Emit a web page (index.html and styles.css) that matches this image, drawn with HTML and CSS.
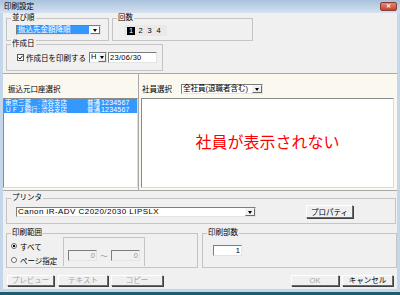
FILE: index.html
```html
<!DOCTYPE html>
<html lang="ja">
<head>
<meta charset="UTF-8">
<title>印刷設定</title>
<link rel="stylesheet" href="styles.css">
</head>
<body>

<div class="window">
<div class="titlebar">
<span class="title">印刷設定</span>
<span class="close">✕</span>
</div>

<div class="client">

<div class="top">
<div class="row">
<div class="group g-sort">
<span class="group-label">並び順</span>
<div class="select sel-sort"><span class="sel-text hl">振込先金額降順</span><span class="arrow"></span></div>
</div>
<div class="group g-count">
<span class="group-label">回数</span>
<div class="counts"><span class="num on">1</span><span class="num">2</span><span class="num">3</span><span class="num">4</span></div>
</div>
</div>

<div class="group g-date">
<span class="group-label">作成日</span>
<div class="date-row">
<span class="check"><svg width="5" height="5" viewBox="0 0 5 5"><polyline points="0.5,2.5 2,4 4.5,0.8" fill="none" stroke="#000" stroke-width="1"/></svg></span>
<span class="check-text">作成日を印刷する</span>
<div class="select sel-era"><span class="sel-text">H</span><span class="arrow"></span></div>
<div class="input date-input">23/06/30</div>
</div>
</div>
</div>

<div class="middle">
<div class="panel p-left">
<div class="panel-head">振込元口座選択</div>
<div class="list">
<div class="list-row sel"><span class="bank">東京三菱</span><span class="colon">:</span><span class="branch">渋谷支店</span><span class="type">普通</span><span class="no">1234567</span></div>
<div class="list-row sel"><span class="bank">ＵＦＪ銀行</span><span class="colon">:</span><span class="branch">渋谷支店</span><span class="type">普通</span><span class="no">1234567</span></div>
</div>
</div>
<div class="panel p-right">
<div class="panel-head">
<span>社員選択</span>
<div class="select sel-emp"><span class="sel-text">全社員(退職者含む)</span><span class="arrow"></span></div>
</div>
<div class="list emp-list">
<span class="empty-msg">社員が表示されない</span>
</div>
</div>
</div>

<div class="group g-printer">
<span class="group-label">プリンタ</span>
<div class="printer-row">
<div class="select sel-printer"><span class="sel-text">Canon iR-ADV C2020/2030 LIPSLX</span><span class="arrow"></span></div>
<button class="btn btn-prop">プロパティ</button>
</div>
</div>

<div class="row range-row">
<div class="group g-range">
<span class="group-label">印刷範囲</span>
<div class="radios">
<div class="radio-item"><span class="radio on"></span>すべて</div>
<div class="radio-item"><span class="radio"></span>ページ指定</div>
</div>
<div class="pages">
<div class="input page-input">0</div>
<span class="tilde">～</span>
<div class="input page-input">0</div>
</div>
</div>
<div class="group g-copies">
<span class="group-label">印刷部数</span>
<div class="input copies-input">1</div>
</div>
</div>

<div class="buttons">
<button class="btn b-preview" disabled>プレビュー</button>
<button class="btn b-text" disabled>テキスト</button>
<button class="btn b-copy" disabled>コピー</button>
<button class="btn b-ok" disabled>OK</button>
<button class="btn b-cancel">キャンセル</button>
</div>

</div>
</div>

</body>
</html>
```

FILE: styles.css
```css
* {
box-sizing: border-box;
}
body {
margin: 0;
background: #1d5d70;
font-family: "Liberation Sans", "Noto Sans CJK JP", sans-serif;
font-size: 7.5px;
color: #000;
}
.window {
width: 400px;
height: 292px;
background: #c4d6ea;
}
.titlebar {
height: 13px;
display: flex;
align-items: center;
padding: 0 3px 0 4px;
background: linear-gradient(#a9c1dc, #d5e2f0);
}
.title {
line-height: 8px;
}
.close {
margin-left: auto;
width: 17px;
height: 9px;
margin-top: -1px;
border: 1px solid #8a3a2c;
border-radius: 2px;
background: linear-gradient(#e08a78, #c5452f);
color: #fff;
font-size: 6px;
line-height: 7px;
text-align: center;
font-weight: bold;
}
.client {
margin: 0 3px;
height: 276px;
background: #f0f0f0;
}

/* group boxes */
.group {
position: relative;
border: 1px solid #c4c4c4;
}
.group-label {
position: absolute;
top: -5px;
left: 4px;
padding: 0 1px;
background: #f0f0f0;
line-height: 8px;
}
.row {
display: flex;
}
.top {
padding: 5px 0 0 3px;
height: 60px;
}
.top .row {
gap: 3px;
}
.g-sort {
width: 103px;
height: 23px;
padding: 6px 0 0 9px;
}
.g-count {
width: 141px;
height: 23px;
padding: 6px 0 0 11px;
}
.g-date {
margin-top: 3px;
width: 157px;
height: 27px;
padding: 7px 0 0 10px;
}

/* selects and inputs */
.select {
display: flex;
height: 10px;
background: #fff;
border: 1px solid;
border-color: #7d7d7d #e4e4e4 #e4e4e4 #7d7d7d;
}
.sel-text {
flex: 1;
padding-left: 1px;
line-height: 8px;
white-space: nowrap;
}
.hl {
background: #3399ff;
color: #fff;
margin: 0 1px 0 0;
}
.arrow {
position: relative;
width: 10px;
border: 1px solid;
border-color: #f4f4f4 #6c6c6c #6c6c6c #f4f4f4;
background: #f0f0f0;
}
.arrow::after {
content: "";
position: absolute;
left: 2px;
top: 2px;
border-left: 2.5px solid transparent;
border-right: 2.5px solid transparent;
border-top: 3px solid #000;
}
.sel-sort {
width: 85px;
}
.sel-sort .arrow {
background: #fff;
}
.counts {
display: flex;
align-items: center;
width: 43px;
height: 11px;
padding-left: 3px;
background: #e9e9e9;
}
.num {
width: 9px;
line-height: 8px;
text-align: center;
}
.num.on {
width: 8px;
margin-right: 1px;
background: #000;
color: #fff;
}
.date-row {
display: flex;
align-items: center;
}
.check {
display: flex;
align-items: center;
justify-content: center;
width: 7px;
height: 7px;
border: 1px solid #555;
background: #fff;
}
.check-text {
margin-left: 2px;
width: 63px;
}
.sel-era {
width: 18px;
height: 11px;
}
.sel-era .arrow {
width: 8px;
}
.sel-era .arrow::after {
left: 1px;
}
.input {
height: 11px;
background: #fff;
border: 1px solid;
border-color: #7d7d7d #e4e4e4 #e4e4e4 #7d7d7d;
line-height: 9px;
padding: 0 1px;
}
.date-input {
width: 49px;
margin-left: 1px;
letter-spacing: 0.3px;
}

/* middle panels */
.middle {
display: flex;
height: 118px;
border-top: 1px solid #a8a8a8;
border-bottom: 1px solid #a8a8a8;
background: #fbf9ef;
}
.panel {
display: flex;
flex-direction: column;
}
.p-left {
width: 136px;
border-right: 1px solid #a8a8a8;
}
.p-right {
flex: 1;
padding: 0 3px 0 2px;
}
.panel-head {
height: 24px;
display: flex;
align-items: center;
padding: 5px 0 0 5px;
}
.p-right .panel-head {
padding-left: 1px;
}
.sel-emp {
width: 82px;
margin-left: 9px;
}
.list {
flex: 1;
margin-bottom: 2px;
background: #fff;
border: 1px solid;
border-color: #8a8a8a #dcdcdc #dcdcdc #8a8a8a;
}
.list-row {
display: flex;
height: 7px;
line-height: 7px;
font-size: 6.5px;
padding-left: 1px;
white-space: nowrap;
}
.list-row.sel {
background: #3399ff;
color: #fff;
}
.bank {
width: 33px;
}
.colon {
width: 3px;
}
.branch {
width: 46px;
}
.type {
width: 14px;
}
.no {
font-size: 7px;
letter-spacing: 0.2px;
}
.emp-list {
display: flex;
align-items: center;
justify-content: center;
}
.empty-msg {
color: #ff0000;
font-size: 16px;
line-height: 18px;
}

/* printer */
.g-printer {
margin: 7px 0 0 3px;
width: 390px;
height: 26px;
padding: 6px 0 0 9px;
}
.printer-row {
display: flex;
align-items: flex-start;
}
.sel-printer {
width: 240px;
margin-top: 2px;
}
.sel-printer .sel-text {
font-size: 8px;
letter-spacing: 0.45px;
}
.btn {
font-family: inherit;
font-size: 7.5px;
background: #f0f0f0;
color: #000;
padding: 0;
border: 1px solid;
border-color: #fff #6a6a6a #6a6a6a #fff;
box-shadow: 1px 1px 0 #404040;
}
.btn:disabled {
color: #a6a6a6;
}
.btn-prop {
margin-left: 50px;
width: 47px;
height: 13px;
}

/* range and copies */
.range-row {
margin: 9px 0 0 3px;
gap: 4px;
}
.g-range {
width: 192px;
height: 35px;
display: flex;
}
.radios {
width: 56px;
padding: 5px 0 0 4px;
}
.radio-item {
display: flex;
align-items: center;
height: 14px;
gap: 3px;
}
.radio {
width: 6px;
height: 6px;
border-radius: 50%;
border: 1px solid #6d6d6d;
background: #fff;
}
.radio.on {
background: radial-gradient(circle, #000 1.2px, #fff 1.6px);
}
.pages {
display: flex;
align-items: center;
width: 82px;
height: 29px;
margin-top: 3px;
padding: 7px 0 0 4px;
align-self: flex-start;
border: 1px solid #c4c4c4;
border-bottom: none;
}
.page-input {
width: 29px;
height: 11px;
text-align: right;
color: #9a9a9a;
background: #f0f0f0;
}
.tilde {
width: 14px;
text-align: center;
color: #8a8a8a;
}
.g-copies {
width: 195px;
height: 35px;
padding: 11px 0 0 10px;
}
.copies-input {
width: 29px;
height: 11px;
text-align: right;
}

/* bottom buttons */
.buttons {
display: flex;
margin-top: 7px;
padding-left: 4px;
}
.buttons .btn {
height: 11px;
line-height: 8px;
}
.b-preview {
width: 47px;
}
.b-text {
width: 50px;
margin-left: 4px;
}
.b-copy {
width: 52px;
margin-left: 3px;
}
.b-ok {
width: 48px;
margin-left: 128px;
}
.b-cancel {
width: 51px;
margin-left: 3px;
}
```
